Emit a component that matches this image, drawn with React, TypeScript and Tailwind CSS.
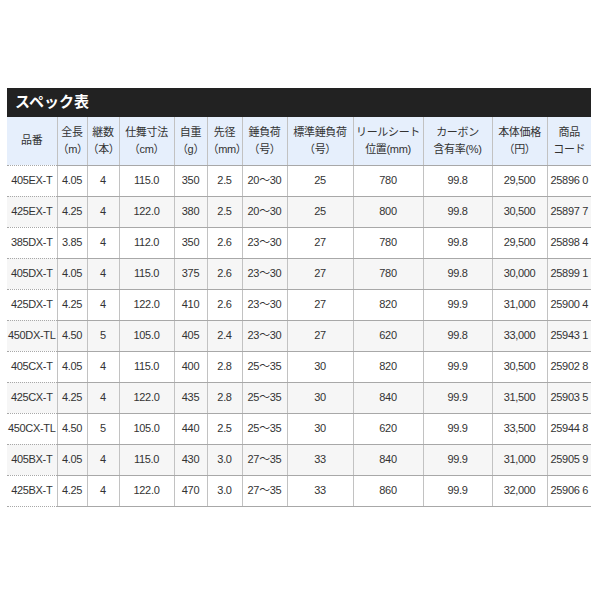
const widths = [50, 30, 32, 55, 33, 35, 45, 66, 70, 69, 55, 44];

const headers: string[][] = [
  ["品番"],
  ["全長", "（m）"],
  ["継数", "（本）"],
  ["仕舞寸法", "（cm）"],
  ["自重", "（g）"],
  ["先径", "（mm）"],
  ["錘負荷", "（号）"],
  ["標準錘負荷", "（号）"],
  ["リールシート", "位置(mm)"],
  ["カーボン", "含有率(%)"],
  ["本体価格", "（円）"],
  ["商品", "コード"],
];

const rows: string[][] = [
  ["405EX-T", "4.05", "4", "115.0", "350", "2.5", "20〜30", "25", "780", "99.8", "29,500", "25896 0"],
  ["425EX-T", "4.25", "4", "122.0", "380", "2.5", "20〜30", "25", "800", "99.8", "30,500", "25897 7"],
  ["385DX-T", "3.85", "4", "112.0", "350", "2.6", "23〜30", "27", "780", "99.8", "29,500", "25898 4"],
  ["405DX-T", "4.05", "4", "115.0", "375", "2.6", "23〜30", "27", "780", "99.8", "30,000", "25899 1"],
  ["425DX-T", "4.25", "4", "122.0", "410", "2.6", "23〜30", "27", "820", "99.9", "31,000", "25900 4"],
  ["450DX-TL", "4.50", "5", "105.0", "405", "2.4", "23〜30", "27", "620", "99.8", "33,000", "25943 1"],
  ["405CX-T", "4.05", "4", "115.0", "400", "2.8", "25〜35", "30", "820", "99.9", "30,500", "25902 8"],
  ["425CX-T", "4.25", "4", "122.0", "435", "2.8", "25〜35", "30", "840", "99.9", "31,500", "25903 5"],
  ["450CX-TL", "4.50", "5", "105.0", "440", "2.5", "25〜35", "30", "620", "99.9", "33,500", "25944 8"],
  ["405BX-T", "4.05", "4", "115.0", "430", "3.0", "27〜35", "33", "840", "99.9", "31,000", "25905 9"],
  ["425BX-T", "4.25", "4", "122.0", "470", "3.0", "27〜35", "33", "860", "99.9", "32,000", "25906 6"],
];

export default function App() {
  return (
    <div
      className="w-[600px] h-[600px] bg-white pt-[88px] pl-[7px] text-[#333]"
      style={{ fontFamily: '"Liberation Sans", "Noto Sans CJK JP", sans-serif' }}
    >
      <div className="w-[584px]">
        {/* タイトルバー */}
        <div className="h-[29px] bg-[#222222] flex items-center pl-[8px]">
          <h2 className="text-white text-[15px] font-bold">スペック表</h2>
        </div>

        <table className="w-[584px] table-fixed border-collapse text-[11px] tracking-[-0.03em]">
          <colgroup>
            {widths.map((w, i) => (
              <col key={i} style={{ width: w }} />
            ))}
          </colgroup>
          <thead>
            <tr className="h-[48px] bg-[#e6effc]">
              {headers.map((h, i) => (
                <th
                  key={i}
                  className={`font-normal text-center align-middle p-0 leading-[17px] whitespace-nowrap border-b border-dotted border-b-[#a8a8a8] ${
                    i > 0 ? "border-l border-l-[#c2c2c2] border-solid" : ""
                  }`}
                >
                  {h.map((line, j) => (
                    <div key={j}>{line}</div>
                  ))}
                </th>
              ))}
            </tr>
          </thead>
          <tbody>
            {rows.map((r, ri) => (
              <tr key={ri} className={`h-[31px] ${ri % 2 === 1 ? "bg-[#f6f6f6]" : "bg-white"}`}>
                {r.map((c, ci) => (
                  <td
                    key={ci}
                    className={`text-center align-middle p-0 whitespace-nowrap border-b border-dotted border-b-[#a8a8a8] ${
                      ci > 0 ? "border-l border-l-[#c2c2c2] border-solid" : ""
                    }`}
                  >
                    {c}
                  </td>
                ))}
              </tr>
            ))}
          </tbody>
        </table>
      </div>
    </div>
  );
}
